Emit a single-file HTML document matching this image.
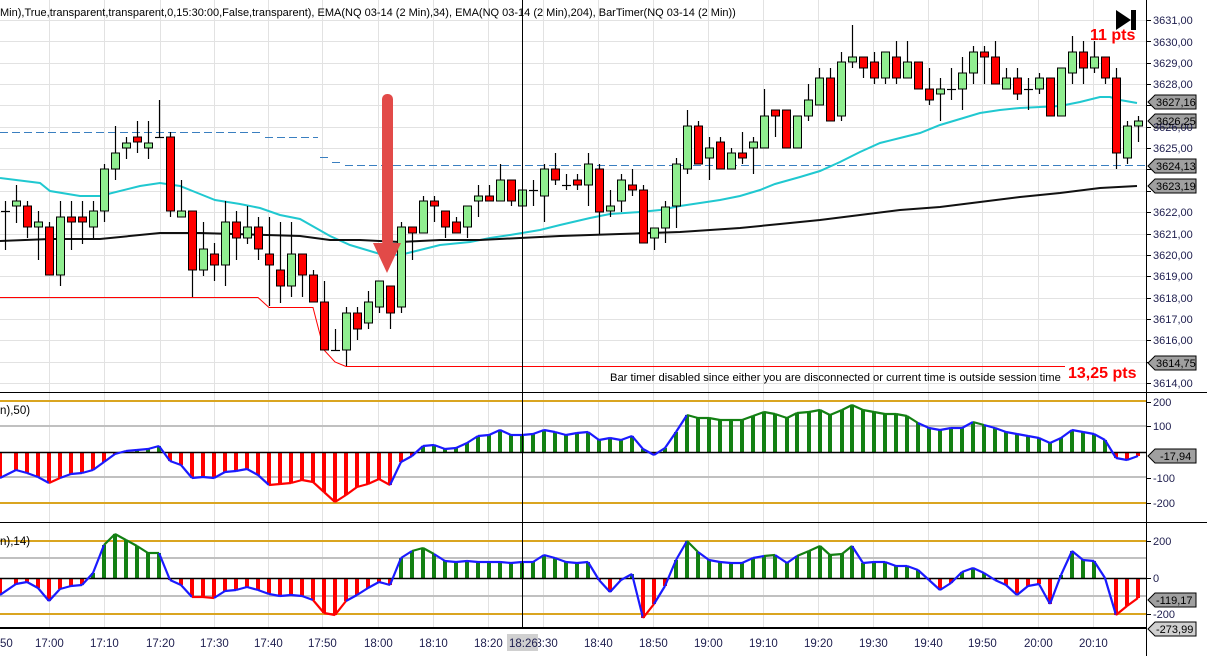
<!DOCTYPE html>
<html><head><meta charset="utf-8">
<style>
html,body{margin:0;padding:0;background:#fff;}
svg{display:block;font-family:"Liberation Sans",Arial,sans-serif;}
</style></head>
<body>
<svg id="s" width="1207" height="656" viewBox="0 0 1207 656" xmlns="http://www.w3.org/2000/svg">
<rect width="1207" height="656" fill="#fff"/>
<g id="grid"></g>
<g id="lines"></g>
<g id="candles"></g>
<g id="hist"></g>
<g>
<rect x="382" y="94" width="11" height="152" rx="5" fill="#e24a48"/>
<polygon points="373,243 401,243 387,273" fill="#e24a48"/>
</g>
<line x1="522.5" y1="0" x2="522.5" y2="628" stroke="#000" stroke-width="1"/>
<text x="0" y="16" font-size="11" fill="#000">Min),True,transparent,transparent,0,15:30:00,False,transparent), EMA(NQ 03-14 (2 Min),34), EMA(NQ 03-14 (2 Min),204), BarTimer(NQ 03-14 (2 Min))</text>
<text x="0" y="414" font-size="11.5" fill="#000">n),50)</text>
<text x="0" y="545" font-size="11.5" fill="#000">n),14)</text>
<text x="1090" y="40" font-size="16" font-weight="bold" fill="#f00">11 pts</text>
<polygon points="1116,10 1116,30 1131,20" fill="#000"/>
<rect x="1131" y="10" width="5" height="20" fill="#000"/>
<text x="1068" y="378" font-size="16" font-weight="bold" fill="#f00">13,25 pts</text>
<text x="610" y="381" font-size="11.2" fill="#000">Bar timer disabled since either you are disconnected or current time is outside session time</text>
<g id="axis"></g>
</svg>
<script>
var NS="http://www.w3.org/2000/svg";
function el(p,t,a){var e=document.createElementNS(NS,t);for(var k in a)e.setAttribute(k,a[k]);document.getElementById(p).appendChild(e);return e;}
var AX=1146;
var tx=[49,104,160,214,268,322,378,433,488,543,598,653,708,763,818,873,928,982,1038,1093];
tx.forEach(function(x){el('grid','line',{x1:x+.5,y1:0,x2:x+.5,y2:628,stroke:'#e2e2e2'});});
function py(p){return 20+(3631-p)*21.35;}
for(var p=3614;p<=3631;p++){var y=Math.round(py(p))+.5;el('grid','line',{x1:0,y1:y,x2:AX,y2:y,stroke:'#e2e2e2'});}
function hl(y,c,w){el('grid','line',{x1:0,y1:y,x2:AX,y2:y,stroke:c,'stroke-width':w||1});}
hl(401,'#daa520',2);hl(426,'#c0c0c0',2);hl(477,'#c0c0c0',2);hl(503,'#daa520',2);
hl(541,'#daa520',2);hl(558,'#c0c0c0',2);hl(596,'#c0c0c0',2);hl(614,'#daa520',2);
el('axis','line',{x1:0,y1:392.5,x2:AX,y2:392.5,stroke:'#000'});
el('axis','line',{x1:0,y1:522.5,x2:AX,y2:522.5,stroke:'#000'});
el('axis','line',{x1:0,y1:628,x2:AX,y2:628,stroke:'#000','stroke-width':2});
el('axis','line',{x1:AX+.5,y1:0,x2:AX+.5,y2:656,stroke:'#000'});
el('axis','line',{x1:AX,y1:392.5,x2:1207,y2:392.5,stroke:'#000'});
el('axis','line',{x1:AX,y1:522.5,x2:1207,y2:522.5,stroke:'#000'});
function dash(x1,x2,y){el('lines','line',{x1:x1,y1:y,x2:x2,y2:y,stroke:'#3a7fc0','stroke-dasharray':'8,4'});}
dash(0,264,132.5);dash(265,318,137.5);dash(320,330,157.5);dash(332,342,162.5);dash(345,1146,165.5);
el('lines','polyline',{points:'0,297.5 258,297.5 269,307.5 313,307.5 324,350 335,362 346,366.5 1065,366.5',fill:'none',stroke:'#f00'});
el('lines','polyline',{points:'0,178 40,183 50,191 80,196 100,196 140,186 160,183 180,186 200,194 215,200 240,204 260,208 280,215 300,219 330,236 350,245 380,254 400,255 420,250 440,245 470,242 490,238 510,235 540,230 560,225 590,218 610,214 640,212 660,210 680,206 700,203 720,200 740,196 760,190 775,184 800,177 820,171 840,162 860,152 880,143 900,138 920,133 940,125 960,119 980,113 1000,110 1020,108 1040,107 1060,106 1080,102 1100,97 1110,97 1120,100 1137,103',fill:'none',stroke:'#20c8d0','stroke-width':2});
el('lines','polyline',{points:'0,241 50,239 100,239 160,233 200,233 300,236 330,240 360,240 400,242 440,240 480,240 520,238 560,236 620,234 680,232 740,228 780,224 820,220 860,215 900,210 940,207 980,202 1020,197 1060,193 1100,188 1137,186',fill:'none',stroke:'#111','stroke-width':2});
var C=[[211,211,201,250,2],[201,206,185,223,1],[206,227,201,238,0],[222,227,211,260,1],[227,275,222,275,0],[217,275,201,286,1],[217,222,201,250,0],[217,222,201,244,0],[211,227,201,238,1],[169,211,164,222,1],[153,169,126,180,1],[143,148,137,159,1],[137,142,121,153,0],[143,148,121,159,1],[137,137,100,137,2],[137,211,132,217,0],[211,217,180,217,1],[211,270,211,297,0],[249,270,222,276,1],[254,265,243,281,0],[222,265,201,286,1],[222,238,211,260,0],[227,238,206,244,1],[227,249,217,260,0],[254,265,217,306,0],[270,286,222,303,0],[254,286,222,297,1],[254,275,254,297,0],[275,302,270,302,0],[302,350,281,350,0],[350,350,329,350,2],[313,350,307,366,1],[313,329,307,340,0],[302,323,291,329,1],[281,307,281,313,1],[286,313,286,329,0],[227,307,222,313,1],[227,233,227,260,0],[201,233,196,233,1],[201,206,196,222,0],[211,227,211,238,0],[222,233,217,233,0],[206,227,206,238,1],[196,201,185,217,1],[196,201,185,201,0],[180,201,164,201,1],[180,201,180,206,0],[190,206,190,206,1],[190,190,180,206,2],[169,196,164,222,1],[169,180,153,185,0],[185,185,174,190,2],[180,185,174,190,0],[164,185,153,206,1],[169,212,164,234,0],[206,211,190,217,1],[180,201,174,212,1],[185,190,169,196,0],[190,243,185,243,0],[228,238,228,250,1],[207,228,201,243,1],[164,206,158,228,1],[126,169,110,174,1],[126,164,121,164,0],[148,158,137,180,1],[142,169,137,169,0],[153,169,148,169,1],[153,158,132,164,0],[142,148,137,174,1],[116,148,89,148,1],[110,116,110,137,0],[110,148,110,148,0],[116,148,116,148,1],[100,116,84,121,1],[78,105,68,105,1],[78,121,68,121,0],[62,116,52,121,1],[57,62,25,68,1],[57,68,57,78,0],[62,78,52,84,0],[52,78,52,84,1],[57,78,41,84,0],[62,78,41,78,1],[62,89,62,89,0],[89,100,68,105,0],[89,94,78,121,1],[89,89,68,100,2],[73,89,57,110,1],[52,73,46,84,1],[52,57,46,84,0],[57,84,41,84,0],[78,89,68,89,1],[78,94,68,100,0],[89,89,78,110,2],[78,89,73,94,1],[78,116,78,116,0],[68,116,68,116,1],[52,73,36,84,1],[52,68,41,84,0],[57,68,41,73,1],[57,78,57,84,0],[78,153,68,169,0],[126,158,121,164,1],[121,126,116,142,1]];
C.forEach(function(c,i){var x=Math.round(5+i*11.0);
el('candles','line',{x1:x+.5,y1:c[2],x2:x+.5,y2:c[3],stroke:'#000','stroke-width':1.2});
if(c[4]==2){el('candles','line',{x1:x-4,y1:c[0]+.5,x2:x+5,y2:c[0]+.5,stroke:'#000','stroke-width':1.2});}
else el('candles','rect',{x:x-3.5,y:c[0],width:8,height:Math.max(c[1]-c[0],4),fill:c[4]?'#90ee90':'#f00',stroke:'#000','stroke-width':1});
});
function hist(pts,zero,hiY,loY){
 pts.forEach(function(p){var v=p[1];el('hist','rect',{x:p[0]-2,y:Math.min(v,zero),width:4,height:Math.abs(v-zero)||0.5,fill:v<zero?'#138013':'#f00'});});
 el('hist','line',{x1:0,y1:zero+.5,x2:AX,y2:zero+.5,stroke:'#000','stroke-width':1.5});
 for(var i=0;i<pts.length-1;i++){var a=pts[i],b=pts[i+1];var col='#1a1aff';
  if(a[1]>loY&&b[1]>loY)col='#f00';else if(a[1]<hiY&&b[1]<hiY)col='#138013';
  el('hist','line',{x1:a[0],y1:a[1],x2:b[0],y2:b[1],stroke:col,'stroke-width':2.2});}
}
var P2=[[0,478],[16,470],[27,473],[38,477],[49,483],[60,478],[71,474],[82,473],[93,470],[104,462],[115,454],[126,451],[137,450],[148,449],[159,446],[170,461],[181,465],[192,478],[203,477],[214,478],[225,472],[236,471],[247,469],[258,475],[269,485],[280,484],[291,483],[302,480],[313,482],[324,492],[335,502],[346,495],[357,487],[368,484],[379,479],[390,485],[401,462],[412,456],[423,446],[434,445],[445,449],[456,448],[467,443],[478,436],[489,435],[500,430],[511,435],[522,435],[533,434],[544,430],[555,432],[566,435],[577,433],[588,432],[599,440],[610,438],[621,440],[632,436],[643,449],[654,455],[665,448],[676,432],[687,415],[698,418],[709,418],[720,420],[731,420],[742,420],[753,416],[764,412],[775,414],[787,418],[797,413],[809,412],[820,410],[830,415],[842,410],[852,405],[863,410],[874,412],[885,414],[896,414],[907,416],[918,423],[929,428],[940,430],[951,428],[962,428],[973,422],[984,425],[995,428],[1006,432],[1017,434],[1028,436],[1039,438],[1050,443],[1061,438],[1072,430],[1083,432],[1094,434],[1105,440],[1116,458],[1127,460],[1138,456]];
var P3=[[0,595],[16,584],[27,582],[38,588],[49,601],[60,589],[71,586],[82,585],[93,573],[104,545],[115,534],[126,540],[137,546],[148,553],[159,553],[170,580],[181,585],[192,597],[203,597],[214,598],[225,591],[236,590],[247,587],[258,590],[269,594],[280,596],[291,595],[302,596],[313,600],[324,613],[335,615],[346,601],[357,595],[368,588],[379,582],[390,585],[401,558],[412,551],[423,548],[434,554],[445,561],[456,562],[467,561],[478,562],[489,562],[500,562],[511,563],[522,562],[533,562],[544,555],[555,558],[566,562],[577,563],[588,562],[599,580],[610,592],[621,580],[632,574],[643,618],[654,604],[665,586],[676,560],[687,541],[698,552],[709,560],[720,562],[731,563],[742,563],[753,558],[764,556],[775,555],[787,563],[797,556],[809,551],[820,546],[830,555],[842,554],[852,546],[863,563],[874,562],[885,562],[896,566],[907,566],[918,570],[929,580],[940,590],[951,583],[962,572],[973,568],[984,573],[995,580],[1006,585],[1017,595],[1028,586],[1039,584],[1050,604],[1061,575],[1072,551],[1083,560],[1094,561],[1105,578],[1116,615],[1127,606],[1138,598]];
hist(P2,452,426,477);hist(P3,578,558,596);
for(var p=3614;p<=3631;p++){var y=Math.round(py(p))+.5;el('axis','line',{x1:AX,y1:y,x2:AX+5,y2:y,stroke:'#000'});}
[[402],[426],[478],[503],[541],[578],[614]].forEach(function(a){el('axis','line',{x1:AX,y1:a[0]+.5,x2:AX+5,y2:a[0]+.5,stroke:'#000'});});
function tag(y,fill){el('axis','polygon',{points:(AX+2)+','+y+' '+(AX+9)+','+(y-7)+' 1196,'+(y-7)+' 1196,'+(y+7)+' '+(AX+9)+','+(y+7),fill:fill,stroke:'#000'});}
tag(102,'#a0a0a0');tag(121,'#a0a0a0');tag(166,'#a0a0a0');tag(186,'#a0a0a0');tag(363,'#a0a0a0');
tag(456,'#a0a0a0');tag(600,'#a0a0a0');tag(629,'#d0d0d0');
</script>
<svg width="1207" height="656" style="position:absolute;left:0;top:0" xmlns="http://www.w3.org/2000/svg" font-family="Liberation Sans,Arial,sans-serif" font-size="11" fill="#202050">
<g>
<text x="1153" y="24">3631,00</text>
<text x="1153" y="46">3630,00</text>
<text x="1153" y="67">3629,00</text>
<text x="1153" y="88">3628,00</text>
<text x="1153" y="131">3626,00</text>
<text x="1153" y="152">3625,00</text>
<text x="1153" y="216">3622,00</text>
<text x="1153" y="238">3621,00</text>
<text x="1153" y="259">3620,00</text>
<text x="1153" y="280">3619,00</text>
<text x="1153" y="302">3618,00</text>
<text x="1153" y="323">3617,00</text>
<text x="1153" y="344">3616,00</text>
<text x="1153" y="387">3614,00</text>
<text x="1156" y="106" fill="#000">3627,16</text>
<text x="1156" y="125" fill="#000">3626,25</text>
<text x="1156" y="170" fill="#000">3624,13</text>
<text x="1156" y="190" fill="#000">3623,19</text>
<text x="1156" y="367" fill="#000">3614,75</text>
<text x="1153" y="406">200</text>
<text x="1153" y="430">100</text>
<text x="1153" y="482">-100</text>
<text x="1153" y="507">-200</text>
<text x="1160" y="460" fill="#000">-17,94</text>
<text x="1153" y="545">200</text>
<text x="1153" y="582">0</text>
<text x="1153" y="618">-200</text>
<text x="1156" y="604" fill="#000">-119,17</text>
<text x="1156" y="633" fill="#000">-273,99</text>
</g>
<g font-size="11.5">
<text x="0" y="647">50</text>
<text x="35" y="647">17:00</text>
<text x="90" y="647">17:10</text>
<text x="146" y="647">17:20</text>
<text x="200" y="647">17:30</text>
<text x="254" y="647">17:40</text>
<text x="308" y="647">17:50</text>
<text x="364" y="647">18:00</text>
<text x="419" y="647">18:10</text>
<text x="474" y="647">18:20</text>
<text x="529" y="647">18:30</text>
<rect x="507" y="634" width="31" height="17" fill="#d0d0d0"/>
<text x="509" y="647">18:26</text>
<text x="584" y="647">18:40</text>
<text x="639" y="647">18:50</text>
<text x="694" y="647">19:00</text>
<text x="749" y="647">19:10</text>
<text x="804" y="647">19:20</text>
<text x="859" y="647">19:30</text>
<text x="914" y="647">19:40</text>
<text x="968" y="647">19:50</text>
<text x="1024" y="647">20:00</text>
<text x="1079" y="647">20:10</text>
</g>
</svg>
</body></html>
